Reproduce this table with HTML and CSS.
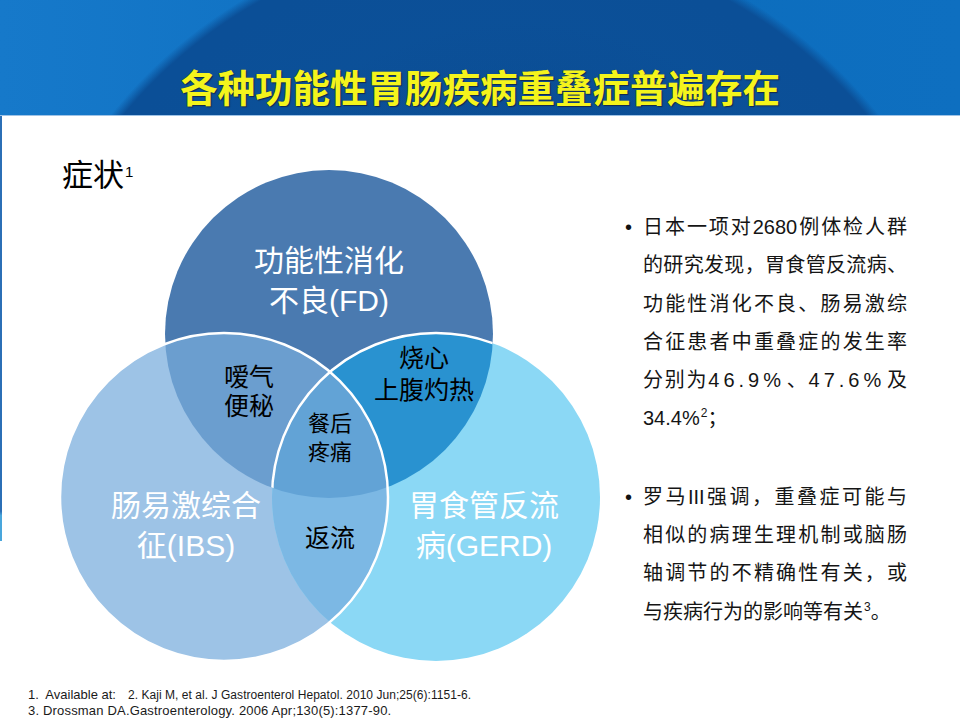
FILE: index.html
```html
<!DOCTYPE html>
<html lang="zh-CN">
<head>
<meta charset="utf-8">
<title>各种功能性胃肠疾病重叠症普遍存在</title>
<link rel="stylesheet" href="styles.css">
</head>
<body>
<header class="header">
  <h1 class="title">各种功能性胃肠疾病重叠症普遍存在</h1>
</header>
<main class="main">
  <section class="left">
    <h2 class="symptom">症状<sup class="sup-lg">1</sup></h2>
    <svg class="venn" width="623" height="569" viewBox="0 0 623 569" xmlns="http://www.w3.org/2000/svg">
      <defs>
        <clipPath id="cT"><circle cx="329" cy="218" r="164"/></clipPath>
        <clipPath id="cL"><circle cx="224" cy="381" r="164"/></clipPath>
        <clipPath id="cR"><circle cx="436" cy="381" r="164"/></clipPath>
      </defs>
      <circle cx="329" cy="218" r="164" fill="#4a7ab0"/>
      <circle cx="224" cy="381" r="164" fill="#9dc3e6"/>
      <circle cx="436" cy="381" r="164" fill="#8bd8f5"/>
      <circle cx="224" cy="381" r="164" fill="#6b9ecf" clip-path="url(#cT)"/>
      <circle cx="436" cy="381" r="164" fill="#2992d0" clip-path="url(#cT)"/>
      <circle cx="436" cy="381" r="164" fill="#7cb8e4" clip-path="url(#cL)"/>
      <g clip-path="url(#cT)">
        <circle cx="436" cy="381" r="164" fill="#62a3d6" clip-path="url(#cL)"/>
      </g>
      <circle cx="436" cy="381" r="164" fill="none" stroke="#ffffff" stroke-width="2.5" clip-path="url(#cT)"/>
      <circle cx="224" cy="381" r="164" fill="none" stroke="#ffffff" stroke-width="2.5"/>

      <text class="lbl-w" x="329" y="155">功能性消化</text>
      <text class="lbl-w" x="329" y="195">不良(FD)</text>

      <text class="lbl-b" x="249" y="270">嗳气</text>
      <text class="lbl-b" x="249" y="299">便秘</text>

      <text class="lbl-b" x="424" y="251">烧心</text>
      <text class="lbl-b" x="424" y="283">上腹灼热</text>

      <text class="lbl-s" x="330" y="315">餐后</text>
      <text class="lbl-s" x="330" y="344">疼痛</text>

      <text class="lbl-b" x="330" y="431">返流</text>

      <text class="lbl-w" x="186" y="400">肠易激综合</text>
      <text class="lbl-w" x="186" y="440">征(IBS)</text>

      <text class="lbl-w" x="484" y="400">胃食管反流</text>
      <text class="lbl-w" x="484" y="440">病(GERD)</text>
    </svg>
  </section>
  <section class="right">
    <div class="item">
      <span class="bullet">•</span>
      <p class="text">
        <span class="ln">日本一项对2680例体检人群</span>
        <span class="ln">的研究发现，胃食管反流病、</span>
        <span class="ln">功能性消化不良、肠易激综</span>
        <span class="ln">合征患者中重叠症的发生率</span>
        <span class="ln">分别为<span class="num">46.9%</span>、<span class="num">47.6%</span>及</span>
        <span class="ln last">34.4%<sup class="sup-sm">2</sup>；</span>
      </p>
    </div>
    <div class="item">
      <span class="bullet">•</span>
      <p class="text">
        <span class="ln">罗马III强调，重叠症可能与</span>
        <span class="ln">相似的病理生理机制或脑肠</span>
        <span class="ln">轴调节的不精确性有关，或</span>
        <span class="ln last">与疾病行为的影响等有关<sup class="sup-sm">3</sup>。</span>
      </p>
    </div>
  </section>
</main>
<footer class="foot">
  <div class="fl">1.&nbsp; Available at:<span class="ref2">2. Kaji M, et al. J Gastroenterol Hepatol. 2010 Jun;25(6):1151-6.</span></div>
  <div class="fl fl2">3. Drossman DA.Gastroenterology. 2006 Apr;130(5):1377-90.</div>
</footer>
</body>
</html>
```

FILE: styles.css
```css
html, body {
  margin: 0;
  padding: 0;
}
body {
  width: 960px;
  height: 720px;
  overflow: hidden;
  background: #ffffff;
  font-family: "Liberation Sans", "Noto Sans CJK SC", sans-serif;
  color: #111111;
}

.header {
  height: 115px;
  border-bottom: 1px solid #9fc3e6;
  box-sizing: content-box;
  display: flex;
  justify-content: center;
  align-items: flex-start;
  background:
    radial-gradient(circle 340px at 520px 360px, rgba(6, 52, 112, 0.35) 0, rgba(6, 52, 112, 0) 340px),
    radial-gradient(circle 490px at 495px 422px, #0c549d 0, #0b4f97 470px, #0b4f97 482px, rgba(11, 79, 151, 0) 492px),
    linear-gradient(90deg, #1679ca 0%, #1072c3 35%, #0c6dbd 65%, #0e6fc0 100%);
}
.title {
  margin: 0;
  padding-top: 67px;
  font-size: 37.5px;
  line-height: 44px;
  font-weight: 700;
  color: #f4f41c;
  text-shadow: 1px 1px 1px #14284a, -0.5px -0.5px 0 #2a3a50;
}

.main {
  position: relative;
  height: 569px;
  display: grid;
  grid-template-columns: 623px 1fr;
}
.main::before {
  content: "";
  position: absolute;
  left: 0;
  top: 0;
  width: 2px;
  height: 425px;
  background: linear-gradient(180deg, #2b6fb6 0%, #2b6fb6 93%, #49a6dc 94%, #49a6dc 100%);
}

.left {
  display: grid;
}
.left > * {
  grid-area: 1 / 1;
}
.symptom {
  margin: 42px 0 0 62px;
  font-size: 31px;
  line-height: 36px;
  font-weight: 400;
  color: #000000;
  align-self: start;
  justify-self: start;
  position: relative;
  z-index: 1;
}
.sup-lg {
  font-size: 15px;
  vertical-align: 9px;
  line-height: 0;
  margin-left: 1px;
}
.venn {
  display: block;
}
.lbl-w {
  fill: #ffffff;
  font-size: 30px;
  text-anchor: middle;
}
.lbl-b {
  fill: #000000;
  font-size: 25px;
  text-anchor: middle;
}
.lbl-s {
  fill: #000000;
  font-size: 22px;
  text-anchor: middle;
}

.right {
  padding-top: 92px;
}
.item {
  display: flex;
}
.item + .item {
  margin-top: 40px;
}
.bullet {
  flex: none;
  width: 20px;
  font-size: 20px;
  line-height: 38.3px;
  padding-left: 2px;
  box-sizing: border-box;
}
.text {
  margin: 0;
  width: 264px;
  font-size: 20px;
  line-height: 38.3px;
  color: #151515;
}
.ln {
  display: block;
  text-align: justify;
  text-align-last: justify;
}
.ln.last {
  text-align: left;
  text-align-last: left;
}
.num {
  letter-spacing: 4px;
}
.sup-sm {
  font-size: 12px;
  vertical-align: 8px;
  line-height: 0;
  margin-left: 1px;
}

.foot {
  padding: 2px 0 0 28px;
  font-size: 13px;
  line-height: 15px;
  color: #1a1a1a;
}
.fl {
  white-space: nowrap;
}
.fl2 {
  letter-spacing: 0.18px;
}
.ref2 {
  font-size: 12px;
  margin-left: 12px;
  letter-spacing: 0.05px;
}
```
